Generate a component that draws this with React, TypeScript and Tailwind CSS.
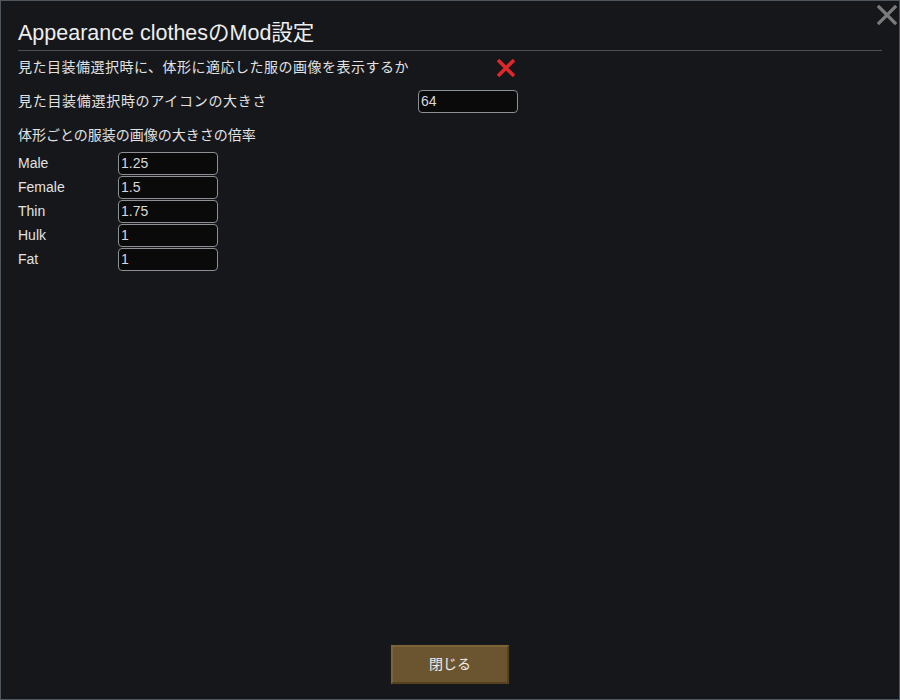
import React from "react";

const font = { fontFamily: '"Liberation Sans", "Noto Sans CJK JP", sans-serif' };

function Field({ value, width = "w-[100px]" }: { value: string; width?: string }) {
  return (
    <div
      className={`${width} h-[23px] bg-[#0a0a0b] border border-[#8c8f93] rounded-[4px] flex items-center px-[2px] text-[14px] text-[#d8d8d8]`}
    >
      {value}
    </div>
  );
}

export default function App() {
  const rows: [string, string][] = [
    ["Male", "1.25"],
    ["Female", "1.5"],
    ["Thin", "1.75"],
    ["Hulk", "1"],
    ["Fat", "1"],
  ];
  return (
    <div
      style={font}
      className="w-[900px] h-[700px] bg-[#15171b] border border-[#4f565e] relative flex flex-col text-[#e2e2e2] overflow-hidden"
    >
      <button className="absolute right-[1px] top-[3px] w-[22px] h-[22px] flex items-center justify-center">
        <svg width="20" height="20" viewBox="0 0 20 20">
          <path d="M2 2 L18 18 M18 2 L2 18" stroke="#7b7b7b" strokeWidth="3.2" strokeLinecap="square" />
        </svg>
      </button>
      <div className="px-[17px] pt-[19px]">
        <div className="text-[21.5px] leading-[26px] text-[#eeeeee] pb-[4px] border-b border-[#4b4e53]">
          Appearance clothesのMod設定
        </div>
        <div className="flex items-center h-[33px] text-[14px] w-[500px]">
          <div className="flex-1 tracking-[0.5px]">見た目装備選択時に、体形に適応した服の画像を表示するか</div>
          <svg width="22" height="22" viewBox="0 0 22 22" className="mr-[1px]">
            <path d="M3 3 L19 19 M19 3 L3 19" stroke="#e0272a" strokeWidth="3.6" strokeLinecap="butt" />
          </svg>
        </div>
        <div className="flex items-center h-[24px] text-[14px] w-[500px] mt-[5px]">
          <div className="flex-1 tracking-[0.7px]">見た目装備選択時のアイコンの大きさ</div>
          <Field value="64" />
        </div>
        <div className="text-[14px] h-[24px] flex items-center mt-[10px]">体形ごとの服装の画像の大きさの倍率</div>
        <div className="flex flex-col gap-[1px] mt-[5px]">
          {rows.map(([k, v]) => (
            <div key={k} className="flex items-center h-[23px] text-[14px]">
              <div className="w-[100px]">{k}</div>
              <Field value={v} />
            </div>
          ))}
        </div>
      </div>
      <div className="flex-1" />
      <div className="flex justify-center pb-[14px]">
        <button className="w-[120px] h-[41px] bg-[#1a1a1a] p-[1px]">
          <div className="w-full h-full bg-[#6b5530] border-t-[2px] border-l-[2px] border-[#7d6438] border-r-[2px] border-b-[2px] border-r-[#54421f] border-b-[#54421f] flex items-center justify-center text-[14px] text-[#eeeeee]">
            閉じる
          </div>
        </button>
      </div>
    </div>
  );
}
